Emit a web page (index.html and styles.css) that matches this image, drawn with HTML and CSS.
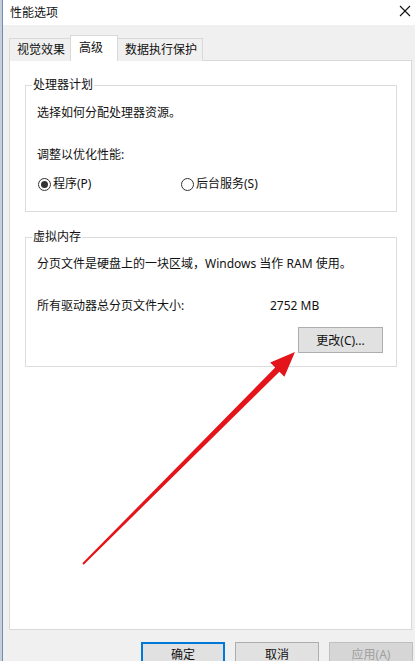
FILE: index.html
```html
<!DOCTYPE html>
<html lang="zh-CN">
    <head>
        <meta charset="UTF-8" />
        <meta name="viewport" content="width=device-width, initial-scale=1.0" />
        <title>性能选项</title>
        <link rel="stylesheet" href="styles.css">
    </head>
    <body>
        <div class="window">
            <div class="titlebar">
                <span class="title">性能选项</span>
                <svg class="close" width="12" height="12" viewBox="0 0 12 12">
                    <path d="M1 1 L11 11 M11 1 L1 11" stroke="#111" stroke-width="1.1" fill="none" />
                </svg>
            </div>
            <div class="dialog">
                <div class="tabs">
                    <div class="tab">视觉效果</div>
                    <div class="tab active">高级</div>
                    <div class="tab">数据执行保护</div>
                </div>
                <div class="panel">
                    <fieldset class="group cpu">
                        <legend>处理器计划</legend>
                        <p class="line">选择如何分配处理器资源。</p>
                        <p class="line spaced">调整以优化性能:</p>
                        <div class="radios">
                            <label class="radio checked"><span class="circle"></span>程序(P)</label>
                            <label class="radio"><span class="circle"></span>后台服务(S)</label>
                        </div>
                    </fieldset>
                    <fieldset class="group memory">
                        <legend>虚拟内存</legend>
                        <p class="line">分页文件是硬盘上的一块区域，Windows 当作 RAM 使用。</p>
                        <div class="line spaced size-row">
                            <span class="size-label">所有驱动器总分页文件大小:</span>
                            <span class="size-value">2752 MB</span>
                        </div>
                        <div class="change-row">
                            <button class="btn change">更改(C)...</button>
                        </div>
                    </fieldset>
                </div>
                <div class="actions">
                    <button class="btn primary">确定</button>
                    <button class="btn">取消</button>
                    <button class="btn disabled">应用(A)</button>
                </div>
            </div>
        </div>

        <svg class="arrow" width="415" height="661" viewBox="0 0 415 661">
            <polygon points="82.3,563.3 83.7,564.7 279.4,371.8 284.4,376.8 295,352 270.2,362.6 275.2,367.6" fill="#e3151a" />
        </svg>
    </body>
</html>
```

FILE: styles.css
```css
* {
    margin: 0;
    padding: 0;
    box-sizing: border-box;
}

body {
    position: relative;
    width: 415px;
    height: 661px;
    overflow: hidden;
    background-color: #c7d0da;
    font-family: "Noto Sans", "Noto Sans CJK SC", sans-serif;
    font-size: 12px;
    line-height: 16px;
    color: #111;
}

.window {
    margin-left: 2px;
    height: 661px;
    border-left: 1px solid #6f8fb2;
    background-color: #f0f0f0;
}

.titlebar {
    display: flex;
    justify-content: space-between;
    align-items: center;
    height: 25px;
    padding: 0 4px 0 7px;
    background-color: #ffffff;
}

.title {
    line-height: 24px;
}

.close {
    margin-top: -4px;
}

.dialog {
    padding-top: 10px;
}

.tabs {
    display: flex;
    align-items: flex-end;
    margin-left: 6px;
    position: relative;
    z-index: 1;
}

.tab {
    height: 23px;
    line-height: 21px;
    padding: 0 5px 0 7px;
    margin-right: -1px;
    border: 1px solid #d9d9d9;
    border-bottom: none;
    background-color: #f0f0f0;
}

.tab.active {
    height: 26px;
    line-height: 24px;
    padding: 0 14px 0 8px;
    background-color: #ffffff;
    position: relative;
    z-index: 2;
}

.panel {
    height: 570px;
    margin: -1px 3px 0 6px;
    padding: 16px 14px 0 15px;
    border: 1px solid #d9d9d9;
    background-color: #ffffff;
}

.group {
    border: 1px solid #dcdcdc;
    padding: 12px 12px 19px 11px;
    min-inline-size: 0;
}

.group legend {
    margin-left: -5px;
    padding: 0 1px;
    line-height: 16px;
}

.group.memory {
    margin-top: 17px;
    padding-top: 11px;
    padding-bottom: 13px;
}

.line {
    height: 16px;
    white-space: nowrap;
}

.line.spaced {
    margin-top: 26px;
}

.radios {
    display: flex;
    margin-top: 13px;
    padding-left: 1px;
}

.radio {
    display: flex;
    align-items: center;
    height: 16px;
}

.radio:first-child {
    width: 143px;
}

.radio .circle {
    width: 13px;
    height: 13px;
    margin-right: 2px;
    border: 1px solid #333;
    border-radius: 50%;
    display: flex;
    justify-content: center;
    align-items: center;
}

.radio.checked .circle::after {
    content: "";
    width: 7px;
    height: 7px;
    border-radius: 50%;
    background-color: #333;
}

.size-row {
    display: flex;
}

.size-label {
    width: 233px;
}

.change-row {
    display: flex;
    justify-content: flex-end;
    margin-top: 13px;
    padding-right: 1px;
}

.btn {
    font-family: inherit;
    font-size: 12px;
    color: #111;
    width: 84px;
    height: 23px;
    border: 1px solid #adadad;
    background-color: #e1e1e1;
}

.btn.change {
    width: 85px;
    height: 26px;
}

.actions {
    display: flex;
    justify-content: flex-end;
    gap: 10px;
    margin-top: 12px;
    padding-right: 2px;
}

.btn.primary {
    border: 2px solid #0078d7;
}

.btn.disabled {
    color: #a0a0a0;
    border-color: #bfbfbf;
    background-color: #d6d6d6;
}

.arrow {
    position: absolute;
    left: 0;
    top: 0;
    pointer-events: none;
}
```
